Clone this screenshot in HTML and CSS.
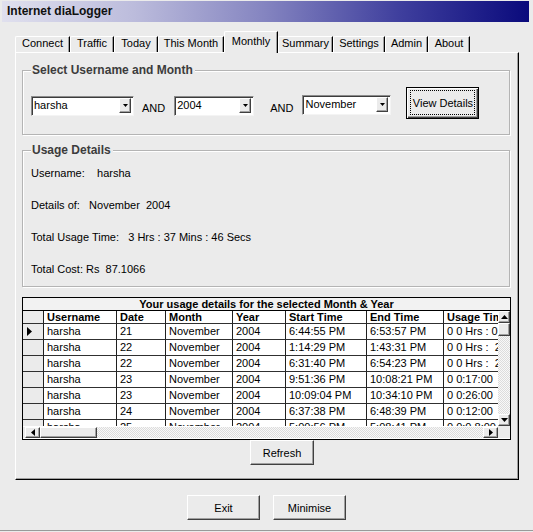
FILE: index.html
```html
<!DOCTYPE html>
<html>
<head>
<meta charset="utf-8">
<title>Internet diaLogger</title>
<link rel="stylesheet" href="styles.css">
</head>
<body>
<div class="window">
  <div class="titlebar">Internet diaLogger</div>

  <div class="tabs">
    <div class="tab">Connect</div>
    <div class="tab">Traffic</div>
    <div class="tab">Today</div>
    <div class="tab">This Month</div>
    <div class="tab active">Monthly</div>
    <div class="tab">Summary</div>
    <div class="tab">Settings</div>
    <div class="tab">Admin</div>
    <div class="tab">About</div>
  </div>

  <div class="panel">
    <div class="group group-select">
      <div class="group-title">Select Username and Month</div>
      <div class="select-row">
        <div class="combo combo-user">
          <span class="combo-text">harsha</span>
          <span class="combo-drop"><svg width="5" height="3" viewBox="0 0 5 3"><polygon points="0,0 5,0 2.5,3" fill="#000"/></svg></span>
        </div>
        <span class="and and-first">AND</span>
        <div class="combo combo-year">
          <span class="combo-text">2004</span>
          <span class="combo-drop"><svg width="5" height="3" viewBox="0 0 5 3"><polygon points="0,0 5,0 2.5,3" fill="#000"/></svg></span>
        </div>
        <span class="and and-second">AND</span>
        <div class="combo combo-month">
          <span class="combo-text">November</span>
          <span class="combo-drop"><svg width="5" height="3" viewBox="0 0 5 3"><polygon points="0,0 5,0 2.5,3" fill="#000"/></svg></span>
        </div>
        <button class="btn btn-default btn-view"><span class="focus-rect">View Details</span></button>
      </div>
    </div>

    <div class="group group-usage">
      <div class="group-title">Usage Details</div>
      <div class="detail detail-first">Username:&nbsp;&nbsp;&nbsp;&nbsp;harsha</div>
      <div class="detail">Details of:&nbsp;&nbsp;&nbsp;November&nbsp;&nbsp;2004</div>
      <div class="detail">Total Usage Time:&nbsp;&nbsp;&nbsp;3 Hrs : 37 Mins : 46 Secs</div>
      <div class="detail">Total Cost: Rs&nbsp;&nbsp;87.1066</div>
    </div>

    <div class="grid">
      <div class="grid-caption">Your usage details for the selected Month &amp; Year</div>
      <div class="grid-main">
        <div class="grid-body">
          <div class="grow ghead">
            <div class="gcell sel"></div>
            <div class="gcell">Username</div>
            <div class="gcell">Date</div>
            <div class="gcell">Month</div>
            <div class="gcell">Year</div>
            <div class="gcell">Start Time</div>
            <div class="gcell">End Time</div>
            <div class="gcell last">Usage Time</div>
          </div>
          <div class="grow">
            <div class="gcell sel"><svg class="pointer" width="5" height="9" viewBox="0 0 5 9"><polygon points="0,0 5,4.5 0,9" fill="#000"/></svg></div>
            <div class="gcell">harsha</div><div class="gcell">21</div><div class="gcell">November</div><div class="gcell">2004</div>
            <div class="gcell">6:44:55 PM</div><div class="gcell">6:53:57 PM</div><div class="gcell last">0 0 Hrs : 0</div>
          </div>
          <div class="grow">
            <div class="gcell sel"></div>
            <div class="gcell">harsha</div><div class="gcell">22</div><div class="gcell">November</div><div class="gcell">2004</div>
            <div class="gcell">1:14:29 PM</div><div class="gcell">1:43:31 PM</div><div class="gcell last">0 0 Hrs :&nbsp; 2</div>
          </div>
          <div class="grow">
            <div class="gcell sel"></div>
            <div class="gcell">harsha</div><div class="gcell">22</div><div class="gcell">November</div><div class="gcell">2004</div>
            <div class="gcell">6:31:40 PM</div><div class="gcell">6:54:23 PM</div><div class="gcell last">0 0 Hrs :&nbsp; 2</div>
          </div>
          <div class="grow">
            <div class="gcell sel"></div>
            <div class="gcell">harsha</div><div class="gcell">23</div><div class="gcell">November</div><div class="gcell">2004</div>
            <div class="gcell">9:51:36 PM</div><div class="gcell">10:08:21 PM</div><div class="gcell last">0 0:17:00</div>
          </div>
          <div class="grow">
            <div class="gcell sel"></div>
            <div class="gcell">harsha</div><div class="gcell">23</div><div class="gcell">November</div><div class="gcell">2004</div>
            <div class="gcell">10:09:04 PM</div><div class="gcell">10:34:10 PM</div><div class="gcell last">0 0:26:00</div>
          </div>
          <div class="grow">
            <div class="gcell sel"></div>
            <div class="gcell">harsha</div><div class="gcell">24</div><div class="gcell">November</div><div class="gcell">2004</div>
            <div class="gcell">6:37:38 PM</div><div class="gcell">6:48:39 PM</div><div class="gcell last">0 0:12:00</div>
          </div>
          <div class="grow">
            <div class="gcell sel"></div>
            <div class="gcell">harsha</div><div class="gcell">25</div><div class="gcell">November</div><div class="gcell">2004</div>
            <div class="gcell">5:00:56 PM</div><div class="gcell">5:08:41 PM</div><div class="gcell last">0 0:0 8:00</div>
          </div>
        </div>
        <div class="vscroll">
          <div class="sbtn"><svg width="7" height="4" viewBox="0 0 7 4"><polygon points="0,4 7,4 3.5,0" fill="#000"/></svg></div>
          <div class="sthumb-v"></div>
          <div class="strack"></div>
          <div class="sbtn"><svg width="7" height="4" viewBox="0 0 7 4"><polygon points="0,0 7,0 3.5,4" fill="#000"/></svg></div>
        </div>
        <div class="hscroll">
          <div class="sbtn sbtn-h"><svg width="4" height="7" viewBox="0 0 4 7"><polygon points="4,0 4,7 0,3.5" fill="#000"/></svg></div>
          <div class="sthumb-h"></div>
          <div class="strack"></div>
          <div class="sbtn sbtn-h"><svg width="4" height="7" viewBox="0 0 4 7"><polygon points="0,0 0,7 4,3.5" fill="#000"/></svg></div>
        </div>
        <div class="scorner"></div>
      </div>
    </div>

    <div class="refresh-row">
      <button class="btn btn-refresh">Refresh</button>
    </div>
  </div>

  <div class="footer">
    <button class="btn btn-exit">Exit</button>
    <button class="btn btn-min">Minimise</button>
  </div>
</div>
</body>
</html>
```

FILE: styles.css
```css
* {
  box-sizing: border-box;
}

html,
body {
  margin: 0;
  padding: 0;
}

body {
  width: 533px;
  height: 532px;
  overflow: hidden;
  background: #ebebeb;
  font-family: "Liberation Sans", Arial, sans-serif;
  font-size: 11px;
  color: #000;
}

.window {
  width: 533px;
  height: 531px;
  border-bottom: 1px solid #9a9a9a;
  padding-top: 1px;
}

.titlebar {
  height: 21px;
  margin: 0 4px 0 2px;
  padding-left: 5px;
  line-height: 21px;
  font-size: 12px;
  font-weight: bold;
  color: #101010;
  background: linear-gradient(to right, #e0e0ee 0%, #bcbcdc 25%, #8484c0 50%, #40409e 75%, #0a0a7c 100%);
}

/* ---- tabs ---- */
.tabs {
  display: grid;
  grid-template-columns: 55px 44px 44px 66px 54px 55px 52px 43px 42px;
  align-items: end;
  height: 30px;
  padding-left: 15px;
}

.tab {
  height: 16px;
  border-top: 1px solid #fff;
  border-left: 1px solid #fff;
  border-right: 1px solid #000;
  border-top-left-radius: 2px;
  line-height: 13px;
  text-align: center;
  white-space: nowrap;
  box-shadow: inset -1px 0 0 #a0a0a0;
}

.tab.active {
  position: relative;
  z-index: 1;
  height: 22px;
  margin-bottom: -1px;
  padding-top: 3px;
  background: #ebebeb;
}

/* ---- panel ---- */
.panel {
  width: 504px;
  height: 428px;
  margin-left: 15px;
  border-top: 1px solid #fff;
  border-left: 1px solid #fff;
  border-right: 1px solid #000;
  border-bottom: 1px solid #000;
  box-shadow: inset -1px -1px 0 #a0a0a0;
}

/* ---- group boxes ---- */
.group {
  width: 488px;
  margin-left: 6px;
  border: 1px solid #b4b4b4;
  box-shadow: inset 1px 1px 0 #fff, 1px 1px 0 #fff;
}

.group-select {
  height: 65px;
  margin-top: 17px;
}

.group-usage {
  height: 137px;
  margin-top: 15px;
}

.group-title {
  width: max-content;
  margin: -8px 0 0 8px;
  padding: 0 2px 0 1px;
  height: 14px;
  line-height: 14px;
  font-size: 12px;
  font-weight: bold;
  color: #3c3c3c;
  background: #ebebeb;
}

.select-row {
  display: flex;
  align-items: flex-start;
  margin: 10px 0 0 8px;
}

.combo {
  display: flex;
  align-items: flex-start;
  height: 20px;
  margin-top: 9px;
  background: #fff;
  border: 1px solid;
  border-color: #8c8c8c #f4f4f4 #f4f4f4 #8c8c8c;
  box-shadow: inset 1px 1px 0 #3c3c3c;
}

.combo-user {
  width: 103px;
}

.combo-year {
  width: 80px;
  margin-left: 9px;
}

.combo-month {
  width: 89px;
  margin-left: 9px;
  margin-top: 8px;
}

.combo-text {
  flex: 1;
  padding: 1px 0 0 2px;
  line-height: 14px;
  white-space: nowrap;
}

.combo-drop {
  display: flex;
  align-items: center;
  justify-content: center;
  width: 12px;
  height: 15px;
  margin: 1px 2px 0 0;
  background: #ebebeb;
  border: 1px solid;
  border-color: #fff #404040 #404040 #fff;
  box-shadow: inset -1px -1px 0 #a0a0a0;
}

.and {
  margin-top: 15px;
  line-height: 13px;
}

.and-first {
  margin-left: 8px;
}

.and-second {
  margin-left: 16px;
}

/* ---- buttons ---- */
.btn {
  display: flex;
  align-items: center;
  justify-content: center;
  margin: 0;
  padding: 0;
  height: 25px;
  font-family: "Liberation Sans", Arial, sans-serif;
  font-size: 11px;
  color: #000;
  background: #ebebeb;
  border: 1px solid;
  border-color: #fff #404040 #404040 #fff;
  box-shadow: inset -1px -1px 0 #a0a0a0;
}

.btn-default {
  border: 1px solid #000;
  box-shadow: inset 1px 1px 0 #fff, inset -1px -1px 0 #404040, inset -2px -2px 0 #a0a0a0;
}

.btn-view {
  width: 73px;
  height: 32px;
  margin-left: 15px;
  padding: 2px 3px 3px 3px;
}

.focus-rect {
  display: flex;
  align-items: center;
  justify-content: center;
  width: 100%;
  height: 100%;
  border: 1px dotted #000;
}

.btn-refresh {
  width: 64px;
  margin-left: 234px;
}

/* ---- usage details ---- */
.detail {
  height: 13px;
  line-height: 13px;
  margin: 19px 0 0 8px;
  white-space: nowrap;
}

.detail-first {
  margin-top: 10px;
}

/* ---- data grid ---- */
.grid {
  width: 489px;
  height: 143px;
  margin: 10px 0 0 6px;
  border: 1px solid #000;
  background: #fff;
}

.grid-caption {
  height: 13px;
  line-height: 12px;
  border-bottom: 1px solid #000;
  text-align: center;
  font-weight: bold;
  background: #f2f2f2;
}

.grid-main {
  display: grid;
  grid-template-columns: 1fr 12px;
  grid-template-rows: 1fr 12px;
  height: 127px;
}

.grid-body {
  overflow: hidden;
}

.grow {
  display: grid;
  grid-template-columns: 21px 73px 49px 67px 53px 81px 77px 80px;
  width: 501px;
  height: 16px;
}

.ghead {
  height: 13px;
  font-weight: bold;
}

.gcell {
  padding-left: 3px;
  line-height: 15px;
  white-space: nowrap;
  overflow: hidden;
  border-right: 1px solid #202020;
  border-bottom: 1px solid #303030;
}

.ghead .gcell {
  line-height: 12px;
}

.gcell.last {
  border-right: none;
}

.gcell.sel {
  display: flex;
  align-items: center;
  padding-left: 4px;
  background: #ebebeb;
}

/* ---- scrollbars ---- */
.vscroll {
  display: flex;
  flex-direction: column;
  background: #ebebeb;
}

.hscroll {
  display: flex;
  padding-left: 2px;
  background: #ebebeb;
  border-top: 1px solid #fff;
}

.sbtn {
  display: flex;
  align-items: center;
  justify-content: center;
  flex: 0 0 12px;
  height: 12px;
  background: #ebebeb;
  border: 1px solid;
  border-color: #fff #404040 #404040 #fff;
  box-shadow: inset -1px -1px 0 #a0a0a0;
}

.sbtn-h {
  flex: 0 0 15px;
  height: 11px;
}

.sthumb-v {
  flex: 0 0 13px;
  background: #ebebeb;
  border: 1px solid;
  border-color: #fff #404040 #404040 #fff;
  box-shadow: inset -1px -1px 0 #a0a0a0;
}

.sthumb-h {
  flex: 0 0 57px;
  height: 11px;
  background: #ebebeb;
  border: 1px solid;
  border-color: #fff #404040 #404040 #fff;
  box-shadow: inset -1px -1px 0 #a0a0a0;
}

.strack {
  flex: 1;
  background: repeating-conic-gradient(#f8f8f8 0 25%, #dcdcdc 0 50%) 0 0 / 2px 2px;
}

.scorner {
  background: #ebebeb;
}

/* ---- footer ---- */
.footer {
  display: flex;
  margin-top: 15px;
}

.btn-exit {
  width: 73px;
  margin-left: 187px;
}

.btn-min {
  width: 73px;
  margin-left: 13px;
}
```
